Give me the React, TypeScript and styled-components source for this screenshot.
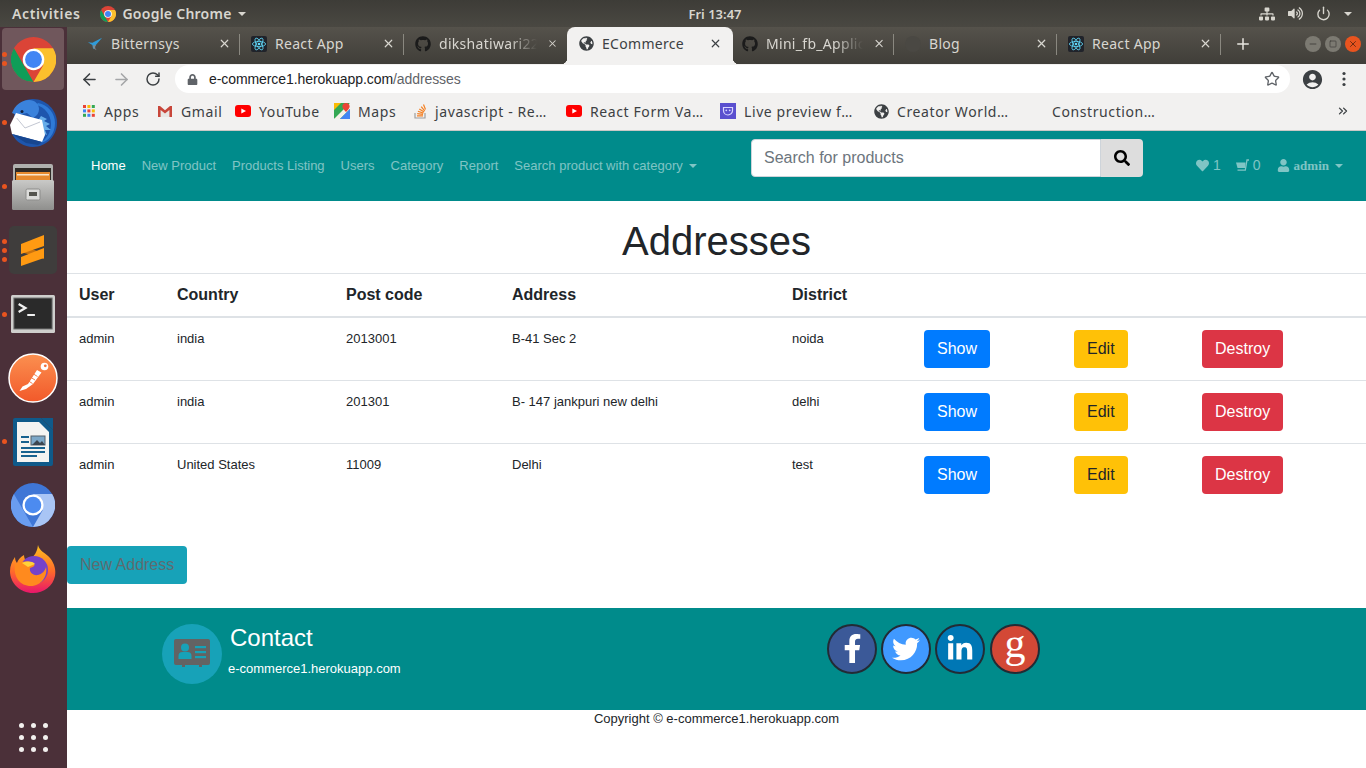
import React from "react";
import styled, { createGlobalStyle } from "styled-components";
import { ArrowLeft, ArrowRight, RotateCw, Star, Plus, X, Minus, Square, Power, ChevronsRight } from "lucide-react";
import {
  FaGithub,
  FaGlobeAmericas,
  FaHeart,
  FaLock,
  FaSearch,
  FaSitemap,
  FaUser,
  FaVolumeUp,
  FaFacebookF,
  FaTwitter,
  FaLinkedinIn,
} from "react-icons/fa";
import { MdAccountCircle } from "react-icons/md";

const GlobalStyle = createGlobalStyle`
  html, body { margin: 0; padding: 0; background: #fff; }
  * { box-sizing: border-box; }
`;

const ChromeLogo = ({ size, a, b, c, hub }: { size: number; a: string; b: string; c: string; hub: string }) => (
  <svg width={size} height={size} viewBox="0 0 48 48">
    <circle cx="24" cy="24" r="24" fill={a} />
    <path d="M24 12h20.900A24 24 0 0 1 24 48l10.400-18z" fill={b} />
    <path d="M24 48A24 24 0 0 1 3.200 12l10.400 18z" fill={c} />
    <circle cx="24" cy="24" r="11.500" fill="#fff" />
    <circle cx="24" cy="24" r="9" fill={hub} />
  </svg>
);

const ReactIcon = () => (
  <svg width="16" height="16" viewBox="0 0 16 16">
    <rect width="16" height="16" rx="2" fill="#20232a" />
    <g fill="none" stroke="#61dafb" strokeWidth="0.8">
      <ellipse cx="8" cy="8" rx="6.600" ry="2.600" />
      <ellipse cx="8" cy="8" rx="6.600" ry="2.600" transform="rotate(60 8 8)" />
      <ellipse cx="8" cy="8" rx="6.600" ry="2.600" transform="rotate(120 8 8)" />
    </g>
    <circle cx="8" cy="8" r="1.300" fill="#61dafb" />
  </svg>
);

const BitternIcon = () => (
  <svg width="18" height="16" viewBox="0 0 18 16">
    <path d="M17 1 6 6.500 1 6l5 3 1 5 3-5z" fill="#2f9bd8" />
    <path d="M10 9c-1 2-1.500 4 1 6-3-1-5-3-4-5.500z" fill="#7d8a91" />
  </svg>
);

const DimCircle = () => (
  <svg width="16" height="16" viewBox="0 0 16 16">
    <circle cx="8" cy="8" r="8" fill="#4a4843" />
  </svg>
);

const AppsIcon = () => {
  const colors = ["#ea4335", "#fbbc05", "#34a853", "#4285f4", "#ea4335", "#fbbc05", "#34a853", "#4285f4", "#ea4335"];
  return (
    <svg width="14" height="14" viewBox="0 0 14 14">
      {colors.map((c, i) => (
        <rect key={i} x={1 + (i % 3) * 4.4} y={1 + Math.floor(i / 3) * 4.4} width="3" height="3" fill={c} />
      ))}
    </svg>
  );
};

const GmailIcon = () => (
  <svg width="16" height="14" viewBox="0 0 16 14">
    <path d="M3.600 6v7h8.800V6L8 9.600z" fill="#e8e6e3" />
    <path d="M1 2h2l5 4.200L13 2h2v11h-2.600V6L8 9.600 3.600 6v7H1z" fill="#c8463a" />
  </svg>
);

const YoutubeIcon = () => (
  <svg width="16" height="12" viewBox="0 0 16 12">
    <rect width="16" height="12" rx="3" fill="#f00" />
    <path d="M6.300 3.400 11 6 6.300 8.600z" fill="#fff" />
  </svg>
);

const MapsIcon = () => (
  <svg width="16" height="16" viewBox="0 0 16 16">
    <rect width="16" height="16" rx="1" fill="#34a853" />
    <path d="M0 16 16 0v6L6 16z" fill="#f4f1e8" />
    <path d="M6 16 16 6v10z" fill="#4285f4" />
    <path d="M0 0h7L0 7z" fill="#fbbc05" />
    <path d="M12 0a3.600 3.600 0 0 1 3.600 3.600C15.600 6 12 9 12 9S8.400 6 8.400 3.600A3.600 3.600 0 0 1 12 0z" fill="#ea4335" />
  </svg>
);

const StackIcon = () => (
  <svg width="14" height="16" viewBox="0 0 14 16">
    <path d="M2 10v5h10v-5" fill="none" stroke="#9e9e9e" strokeWidth="1.200" />
    <path d="M4 12.800h6M4.200 10.600l5.800.8M4.900 8.300l5.500 1.800M6.300 5.900l4.900 3M8.200 3.600l3.500 4.300M10.500 1.500l2 5" stroke="#f48024" strokeWidth="1.200" fill="none" />
  </svg>
);

const LivePreviewIcon = () => (
  <svg width="16" height="16" viewBox="0 0 16 16">
    <rect width="16" height="16" fill="#5a4fcf" />
    <path d="M3.500 4.500h9v3a4.500 4.500 0 0 1-9 0z" fill="none" stroke="#d8d5ff" strokeWidth="1.200" />
    <circle cx="6.300" cy="7.300" r=".9" fill="#d8d5ff" />
    <circle cx="9.700" cy="7.300" r=".9" fill="#d8d5ff" />
  </svg>
);

const ThunderbirdIcon = () => (
  <svg width="50" height="50" viewBox="0 0 50 50">
    <path d="M7 11C11 5 17 1 25 1c13 0 24 11 24 24S38 49 25 49c-9 0-17-5-21-13z" fill="#1e56ad" />
    <path d="M28 7c9 2 15 10 15 19 0 8-4 15-11 19 8-1 15-9 15-20 0-10-7-18-17-20z" fill="#2f7ad6" />
    <path d="M33 18l6 3-3 2 6 3-4 2 5 4-6 0 2 5-5-2 0 5-5-5 2-14z" fill="#66ade9" />
    <path d="M4 15C7 7 14 2 21 2c6 0 10 4 10 9 0 4-2 7-6 9l-6-5-10 2z" fill="#3a82dc" />
    <path d="M8 15 34 22l3 15-3 7L4 36 2 27z" fill="#fff" />
    <path d="M8.700 20 17 30 32 24" fill="none" stroke="#c3c7d2" strokeWidth="1" />
    <path d="M4 36l30 8-4 3-12-2z" fill="#17468f" />
    <circle cx="14" cy="13.500" r="1.500" fill="#10213f" />
  </svg>
);

const FilesIcon = () => (
  <svg width="44" height="46" viewBox="0 0 44 46">
    <defs>
      <linearGradient id="drawer" x1="0" y1="0" x2="0" y2="1">
        <stop offset="0" stopColor="#c9c9c7" />
        <stop offset="1" stopColor="#8f8f8d" />
      </linearGradient>
    </defs>
    <rect x="2" y="0" width="40" height="22" rx="2" fill="#b0b0ae" />
    <rect x="4" y="4" width="36" height="13" fill="#2f2b27" />
    <rect x="5" y="8" width="34" height="9" fill="#e58a2e" />
    <rect x="6" y="10" width="32" height="1.500" fill="#f9e6cb" />
    <rect x="1" y="16" width="42" height="30" rx="1.500" fill="url(#drawer)" />
    <rect x="15" y="25" width="14" height="11" rx="1.500" fill="#dcdcda" stroke="#8d8d8b" />
    <rect x="18" y="28" width="8" height="4" fill="#55554f" />
  </svg>
);

const SublimeIcon = () => (
  <svg width="48" height="48" viewBox="0 0 48 48">
    <rect width="48" height="48" rx="5" fill="#3f3d3c" />
    <path d="M12 20 35 27v6L12 26z" fill="#c9720e" />
    <path d="M12 18 35 9v11L12 28z" fill="#ff9a12" />
    <path d="M12 31 35 22v10L12 40z" fill="#ff9a12" />
  </svg>
);

const TerminalIcon = () => (
  <svg width="44" height="38" viewBox="0 0 46 38" preserveAspectRatio="none">
    <rect width="46" height="38" rx="1.500" fill="#cfcfcd" />
    <rect x="3" y="3" width="40" height="31" fill="#2a2a2a" stroke="#767676" />
    <path d="M8 9l7 4-7 4" fill="none" stroke="#f0f0f0" strokeWidth="2.400" />
    <rect x="17" y="19" width="8" height="2" fill="#f0f0f0" />
  </svg>
);

const PostmanIcon = () => (
  <svg width="50" height="50" viewBox="0 0 50 50">
    <defs>
      <linearGradient id="pm" x1="0" y1="0" x2="0" y2="1">
        <stop offset="0" stopColor="#fb9050" />
        <stop offset="1" stopColor="#f2592a" />
      </linearGradient>
    </defs>
    <circle cx="25" cy="25" r="24" fill="url(#pm)" stroke="#fff" strokeWidth="1.500" />
    <path d="M11.500 38l3-4.500L20 31l9-14 4.500 2.500L25 31l-7 5z" fill="#fff" />
    <path d="M20.500 28l4 2.500M23 24.500l4 2.500M25.500 21l4 2.500" stroke="#f4703a" strokeWidth="0.900" />
    <circle cx="36.500" cy="13.500" r="3.800" fill="#fff" />
    <circle cx="37.300" cy="12.800" r="1.400" fill="#f4703a" />
  </svg>
);

const WriterIcon = () => (
  <svg width="40" height="48" viewBox="0 0 40 48">
    <path d="M2 0h26l12 12v34a2 2 0 0 1-2 2H2a2 2 0 0 1-2-2V2a2 2 0 0 1 2-2z" fill="#0f5a8a" />
    <path d="M4 4h22l10 10v30H4z" fill="#f4f4f2" />
    <path d="M28 0h12v12z" fill="#0f5a8a" />
    <rect x="18" y="18" width="14" height="9" fill="#7da8c8" stroke="#55606a" />
    <path d="M19 27l5-5 3 3 2-2 3 4z" fill="#3c4650" />
    <rect x="8" y="18" width="8" height="2" fill="#17628f" />
    <rect x="8" y="23" width="8" height="2" fill="#17628f" />
    <rect x="8" y="29" width="24" height="2" fill="#17628f" />
    <rect x="8" y="33" width="24" height="2" fill="#17628f" />
    <rect x="8" y="37" width="16" height="2" fill="#17628f" />
  </svg>
);

const FirefoxIcon = () => (
  <svg width="46" height="48" viewBox="0 0 46 48">
    <defs>
      <linearGradient id="ff" x1="0" y1="0" x2="0" y2="1">
        <stop offset="0" stopColor="#ffc21f" />
        <stop offset="0.55" stopColor="#ff6a2a" />
        <stop offset="1" stopColor="#e8166b" />
      </linearGradient>
    </defs>
    <path d="M28 0c1 6 8 8 12 13 5 6 6 13 5 18-2 10-11 17-22 17C10 48 0 38 0 26c0-5 2-10 5-14 0 3 1 5 2 6 1-3 3-6 7-8 0 3 1 5 3 5 5-1 10-6 11-15z" fill="url(#ff)" />
    <circle cx="24" cy="25" r="14" fill="#7542c9" />
    <path d="M5 19c6-3 14-3 18-1 3 2 1 4-3 5-1 4 3 8 8 7 4-1 7-4 8-8 2 9-5 19-15 19-11 0-18-9-16-22z" fill="#ff8a1e" />
    <path d="M12 18c5-2 10-2 13 1l-7 3z" fill="#ffd23a" />
  </svg>
);

const ContactCardIcon = () => (
  <svg width="36" height="29" viewBox="0 0 36 29">
    <rect x="0" y="0" width="36" height="26" rx="2" fill="#636363" />
    <rect x="8" y="25" width="3" height="3" fill="#636363" />
    <rect x="25" y="25" width="3" height="3" fill="#636363" />
    <circle cx="11" cy="8.500" r="4" fill="#17a2b8" />
    <path d="M4.500 20v-3a4 4 0 0 1 4-4h5a4 4 0 0 1 4 4v3z" fill="#17a2b8" />
    <rect x="21" y="7" width="11" height="2.200" fill="#17a2b8" />
    <rect x="21" y="12" width="11" height="2.200" fill="#17a2b8" />
    <rect x="21" y="17" width="11" height="2.200" fill="#17a2b8" />
  </svg>
);

const CartIcon = () => (
  <svg width="13" height="13" viewBox="0 0 13 13">
    <path d="M0 3.500h9.500L9 9H1.500z" fill="currentColor" />
    <path d="M1.500 11.200h7.800L11 1h2" fill="none" stroke="currentColor" strokeWidth="1.300" />
  </svg>
);

const Screen = styled.div`
  width: 1366px;
  height: 768px;
  overflow: hidden;
  display: flex;
  flex-direction: column;
  font-family: "Liberation Sans", Arial, sans-serif;
`;

const TopBar = styled.div`
  height: 27px;
  flex: none;
  background: linear-gradient(#3d3c37, #4a4842);
  color: #d8d6cf;
  display: grid;
  grid-template-columns: 1fr auto 1fr;
  align-items: center;
  font-family: "Noto Sans", sans-serif;
  font-size: 14px;
  font-weight: 600;
  padding: 0 0 0 12px;
`;

const TopLeft = styled.div`
  display: flex;
  align-items: center;
`;

const Activities = styled.span`
  letter-spacing: 0.6px;
`;

const AppMenu = styled.div`
  display: flex;
  align-items: center;
  gap: 6px;
  margin-left: 20px;
  letter-spacing: 0.25px;
`;

const Caret = styled.span<{ $size?: number; $color?: string; $gap?: number }>`
  display: inline-block;
  margin-left: ${(p) => p.$gap ?? 0}px;
  border-left: ${(p) => p.$size ?? 4}px solid transparent;
  border-right: ${(p) => p.$size ?? 4}px solid transparent;
  border-top: ${(p) => p.$size ?? 4}px solid ${(p) => p.$color ?? "currentColor"};
`;

const Clock = styled.div`
  font-size: 13px;
  margin-left: 52px;
`;

const TopRight = styled.div`
  display: flex;
  justify-content: flex-end;
  align-items: center;
  gap: 13px;
  padding-right: 14px;
`;

const Body = styled.div`
  flex: 1;
  display: flex;
  min-height: 0;
`;

const Dock = styled.div`
  width: 67px;
  flex: none;
  background: #4b3039;
  display: flex;
  flex-direction: column;
  align-items: center;
  padding: 1px 3px 0 2px;
`;

const DockItem = styled.div<{ $active?: boolean }>`
  position: relative;
  width: 62px;
  height: 62px;
  margin-bottom: 1.750px;
  flex: none;
  display: flex;
  align-items: center;
  justify-content: center;
  border-radius: 4px;
  background: ${(p) => (p.$active ? "#70575c" : "transparent")};
`;

const DotColumn = styled.div`
  position: absolute;
  left: 0;
  top: 0;
  bottom: 0;
  display: flex;
  flex-direction: column;
  justify-content: center;
  gap: 4px;
`;

const Dot = styled.span`
  width: 5px;
  height: 5px;
  border-radius: 50%;
  background: #e9541f;
`;

const Launcher = styled.div`
  margin-top: auto;
  margin-bottom: 16px;
  display: grid;
  grid-template-columns: repeat(3, 5px);
  gap: 7px;
`;

const LauncherDot = styled.span`
  width: 5px;
  height: 5px;
  border-radius: 50%;
  background: #f2f0ee;
`;

const Browser = styled.div`
  flex: 1;
  min-width: 0;
  display: flex;
  flex-direction: column;
`;

const TabStrip = styled.div`
  height: 37px;
  flex: none;
  display: flex;
  align-items: stretch;
  padding-left: 9px;
  background: linear-gradient(#55524b, #403e39);
`;

const Tab = styled.div<{ $w: number; $pl?: number; $active?: boolean; $sep?: boolean }>`
  position: relative;
  width: ${(p) => p.$w}px;
  flex: none;
  display: flex;
  align-items: center;
  padding: 0 ${(p) => (p.$active ? 11 : 9)}px 4px ${(p) => p.$pl ?? 11}px;
  gap: 8px;
  font-family: "Noto Sans", sans-serif;
  font-size: 14px;
  letter-spacing: 0.3px;
  color: ${(p) => (p.$active ? "#3c4043" : "#d8d6d0")};
  background: ${(p) => (p.$active ? "#f2f1f0" : "transparent")};
  border-radius: ${(p) => (p.$active ? "8px 8px 0 0" : "0")};
  &::after {
    content: "";
    display: ${(p) => (p.$sep ? "block" : "none")};
    position: absolute;
    right: 0;
    top: 7px;
    bottom: 9px;
    width: 1px;
    background: #8a8880;
  }
`;

const TabFlare = styled.span<{ $side: "left" | "right" }>`
  position: absolute;
  bottom: 0;
  ${(p) => p.$side}: -6px;
  width: 6px;
  height: 6px;
  background: radial-gradient(
    circle at ${(p) => (p.$side === "left" ? "0 0" : "100% 0")},
    transparent 6px,
    #f2f1f0 6.500px
  );
`;

const TabIcon = styled.span`
  width: 16px;
  flex: none;
  display: flex;
  justify-content: center;
`;

const TabTitle = styled.span<{ $fade?: boolean }>`
  flex: 1;
  white-space: nowrap;
  ${(p) => (p.$fade ? "mask-image: linear-gradient(90deg, #000 70%, transparent 98%);" : "")}
`;

const NewTab = styled.div`
  display: flex;
  align-items: center;
  color: #e8e6e1;
  margin-left: 13px;
  padding-bottom: 4px;
`;

const WindowControls = styled.div`
  margin-left: auto;
  display: flex;
  align-items: center;
  gap: 4px;
  padding: 0 5px 4px 0;
`;

const WinButton = styled.span<{ $close?: boolean }>`
  width: 16px;
  height: 16px;
  border-radius: 50%;
  display: flex;
  align-items: center;
  justify-content: center;
  color: ${(p) => (p.$close ? "#5a2410" : "#3d3b37")};
  background: ${(p) => (p.$close ? "#e9541f" : "#7c7a72")};
`;

const Toolbar = styled.div`
  height: 31px;
  flex: none;
  background: #f2f1f0;
  display: flex;
  align-items: center;
  padding: 0 0 1px 6px;
  color: #5f6368;
`;

const ToolButton = styled.span<{ $color?: string }>`
  width: 32px;
  display: flex;
  justify-content: center;
  color: ${(p) => p.$color ?? "#3c4043"};
`;

const Omnibox = styled.div`
  width: 1115px;
  height: 28px;
  margin: 0 6px;
  border-radius: 14px;
  background: #fff;
  display: flex;
  align-items: center;
  padding: 0 10px 0 12px;
  font-size: 14px;
  letter-spacing: -0.08px;
  color: #202124;
`;

const UrlPath = styled.span`
  color: #5f6368;
`;

const Url = styled.div`
  margin-left: 11px;
  flex: 1;
`;

const Bookmarks = styled.div`
  height: 36px;
  flex: none;
  background: #f2f1f0;
  display: flex;
  align-items: center;
  padding: 0 0 3px 15px;
  border-bottom: 1px solid #c9c8c6;
  font-family: "Noto Sans", sans-serif;
  font-size: 14px;
  letter-spacing: 0.6px;
  color: #3c4043;
`;

const Bookmark = styled.div<{ $w: number }>`
  width: ${(p) => p.$w}px;
  flex: none;
  display: flex;
  align-items: center;
  gap: 8px;
  white-space: nowrap;
`;

const MoreBookmarks = styled.div`
  margin-left: auto;
  padding-right: 16px;
  display: flex;
  color: #3c4043;
`;

const Page = styled.div`
  flex: 1;
  min-height: 0;
  background: #fff;
  color: #212529;
  display: flex;
  flex-direction: column;
`;

const NavBar = styled.nav`
  height: 70px;
  flex: none;
  background: #008b8b;
  display: flex;
  align-items: flex-start;
  padding-left: 16px;
`;

const NavLinks = styled.div`
  display: flex;
  align-items: center;
  margin-top: 27px;
  width: 668px;
`;

const NavLink = styled.a<{ $active?: boolean }>`
  padding: 0 8px;
  font-size: 13px;
  line-height: 15px;
  white-space: nowrap;
  display: flex;
  align-items: center;
  gap: 6px;
  color: ${(p) => (p.$active ? "#fff" : "rgba(255, 255, 255, 0.5)")};
`;

const SearchForm = styled.div`
  margin-top: 8px;
  display: flex;
  width: 392px;
  height: 38px;
`;

const SearchInput = styled.div`
  flex: 1;
  background: #fff;
  border: 1px solid #ced4da;
  border-radius: 4px 0 0 4px;
  padding: 0 12px;
  display: flex;
  align-items: center;
  font-size: 16px;
  color: #6c757d;
`;

const SearchButton = styled.div`
  width: 42px;
  background: #ddd;
  border-radius: 0 4px 4px 0;
  display: flex;
  align-items: center;
  justify-content: center;
  color: #000;
`;

const UserNav = styled.div`
  margin-top: 27px;
  margin-left: 53px;
  display: flex;
  align-items: center;
  color: rgba(255, 255, 255, 0.5);
  font-family: "Liberation Sans", sans-serif;
  font-size: 14px;
  line-height: 15px;
`;

const UserNavItem = styled.span<{ $gap: number; $mr: number }>`
  display: flex;
  align-items: center;
  gap: ${(p) => p.$gap}px;
  margin-right: ${(p) => p.$mr}px;
`;

const AdminName = styled.b`
  font-family: "Liberation Serif", serif;
  font-size: 13px;
  font-weight: 700;
`;

const Title = styled.h1`
  margin: 16px 0 8px;
  font-size: 40px;
  font-weight: 500;
  line-height: 48px;
  text-align: center;
  color: #212529;
`;

const Table = styled.table`
  width: 100%;
  table-layout: fixed;
  border-collapse: collapse;
  font-size: 13px;
`;

const Col = styled.col<{ $w: number }>`
  width: ${(p) => p.$w}px;
`;

const Th = styled.th`
  padding: 11px 12px 12px;
  height: 43px;
  font-size: 16px;
  line-height: 19px;
  font-weight: 700;
  text-align: left;
  border-top: 1px solid #dee2e6;
  border-bottom: 2px solid #dee2e6;
`;

const Td = styled.td`
  padding: 12px;
  height: 63px;
  line-height: 18px;
  vertical-align: top;
  border-top: 1px solid #dee2e6;
`;

const Button = styled.a<{ $bg: string; $fg: string }>`
  display: inline-block;
  padding: 0 13px;
  height: 38px;
  line-height: 37px;
  font-size: 16px;
  border-radius: 4px;
  background: ${(p) => p.$bg};
  color: ${(p) => p.$fg};
`;

const NewAddress = styled(Button)`
  align-self: flex-start;
  margin: 39px 0 24px;
`;

const Footer = styled.footer`
  height: 102px;
  flex: none;
  background: #008b8b;
  display: flex;
  align-items: flex-start;
  padding: 16px 0 0 95px;
  color: #fff;
`;

const ContactCircle = styled.div`
  width: 60px;
  height: 60px;
  flex: none;
  border-radius: 50%;
  background: #17a2b8;
  display: flex;
  align-items: center;
  justify-content: center;
`;

const ContactText = styled.div`
  width: 599px;
  margin-left: 6px;
`;

const ContactTitle = styled.div`
  font-size: 24px;
  line-height: 29px;
  margin: -1px 0 0 2px;
`;

const ContactUrl = styled.div`
  font-size: 13px;
  line-height: 18px;
  margin-top: 8px;
`;

const Socials = styled.div`
  display: flex;
  gap: 4px;
`;

const Social = styled.span<{ $bg: string; $ml?: number }>`
  width: 50px;
  height: 50px;
  margin-left: ${(p) => p.$ml ?? 0}px;
  border-radius: 50%;
  border: 2px solid #222b35;
  background: ${(p) => p.$bg};
  color: #fff;
  display: flex;
  align-items: center;
  justify-content: center;
`;

const GoogleG = styled.span`
  font-family: "Liberation Serif", serif;
  font-size: 42px;
  line-height: 40px;
  margin-top: -12px;
`;

const Copyright = styled.div`
  text-align: center;
  font-size: 13px;
  line-height: 18px;
  color: #212529;
`;

const tabs = [
  { w: 164, icon: <BitternIcon />, title: "Bitternsys", sep: true },
  { w: 164, icon: <ReactIcon />, title: "React App", sep: true },
  { w: 163, icon: <FaGithub size={16} color="#1b1b1b" />, title: "dikshatiwari22", fade: true },
  { w: 166, icon: <FaGlobeAmericas size={15} color="#3c4043" />, title: "ECommerce", active: true },
  { w: 161, pl: 9, icon: <FaGithub size={16} color="#1b1b1b" />, title: "Mini_fb_Applic", fade: true, sep: true },
  { w: 163, icon: <DimCircle />, title: "Blog", sep: true },
  { w: 164, icon: <ReactIcon />, title: "React App", sep: true },
];

const bookmarks = [
  { w: 75, icon: <AppsIcon />, title: "Apps" },
  { w: 78, icon: <GmailIcon />, title: "Gmail" },
  { w: 99, icon: <YoutubeIcon />, title: "YouTube" },
  { w: 79, icon: <MapsIcon />, title: "Maps" },
  { w: 153, icon: <StackIcon />, title: "javascript - Re…" },
  { w: 154, icon: <YoutubeIcon />, title: "React Form Va…" },
  { w: 154, icon: <LivePreviewIcon />, title: "Live preview f…" },
  { w: 178, icon: <FaGlobeAmericas size={15} color="#3c4043" />, title: "Creator World…" },
  { w: 120, icon: null, title: "Construction…" },
];

const navLinks = ["New Product", "Products Listing", "Users", "Category", "Report"];

const columns = [98, 169, 166, 280, 132, 150, 128, 176];

const addresses = [
  { user: "admin", country: "india", post: "2013001", address: "B-41 Sec 2", district: "noida" },
  { user: "admin", country: "india", post: "201301", address: "B- 147 jankpuri new delhi", district: "delhi" },
  { user: "admin", country: "United States", post: "11009", address: "Delhi", district: "test" },
];

const App = () => (
  <Screen>
    <GlobalStyle />
    <TopBar>
      <TopLeft>
        <Activities>Activities</Activities>
        <AppMenu>
          <ChromeLogo size={16} a="#db4437" b="#fbc02d" c="#0f9d58" hub="#4285f4" />
          Google Chrome
          <Caret />
        </AppMenu>
      </TopLeft>
      <Clock>Fri 13:47</Clock>
      <TopRight>
        <FaSitemap size={16} />
        <FaVolumeUp size={15} />
        <Power size={15} strokeWidth={2.2} />
        <Caret />
      </TopRight>
    </TopBar>
    <Body>
      <Dock>
        <DockItem $active>
          <DotColumn>
            <Dot />
            <Dot />
          </DotColumn>
          <ChromeLogo size={45} a="#db4437" b="#fbc02d" c="#0f9d58" hub="#4285f4" />
        </DockItem>
        <DockItem>
          <DotColumn>
            <Dot />
          </DotColumn>
          <ThunderbirdIcon />
        </DockItem>
        <DockItem>
          <DotColumn>
            <Dot />
          </DotColumn>
          <FilesIcon />
        </DockItem>
        <DockItem>
          <DotColumn>
            <Dot />
            <Dot />
            <Dot />
          </DotColumn>
          <SublimeIcon />
        </DockItem>
        <DockItem>
          <DotColumn>
            <Dot />
          </DotColumn>
          <TerminalIcon />
        </DockItem>
        <DockItem>
          <PostmanIcon />
        </DockItem>
        <DockItem>
          <DotColumn>
            <Dot />
          </DotColumn>
          <WriterIcon />
        </DockItem>
        <DockItem>
          <ChromeLogo size={44} a="#3f76d6" b="#a9c5f5" c="#6a9df0" hub="#4c8bf0" />
        </DockItem>
        <DockItem>
          <FirefoxIcon />
        </DockItem>
        <Launcher>
          {Array.from({ length: 9 }).map((_, i) => (
            <LauncherDot key={i} />
          ))}
        </Launcher>
      </Dock>
      <Browser>
        <TabStrip>
          {tabs.map((t, i) => (
            <Tab key={i} $w={t.w} $pl={t.pl} $active={t.active} $sep={t.sep}>
              {t.active && <TabFlare $side="left" />}
              <TabIcon>{t.icon}</TabIcon>
              <TabTitle $fade={t.fade}>{t.title}</TabTitle>
              <X size={13} strokeWidth={2.2} />
              {t.active && <TabFlare $side="right" />}
            </Tab>
          ))}
          <NewTab>
            <Plus size={18} strokeWidth={2} />
          </NewTab>
          <WindowControls>
            <WinButton>
              <Minus size={10} />
            </WinButton>
            <WinButton>
              <Square size={8} />
            </WinButton>
            <WinButton $close>
              <X size={10} />
            </WinButton>
          </WindowControls>
        </TabStrip>
        <Toolbar>
          <ToolButton>
            <ArrowLeft size={19} strokeWidth={2} />
          </ToolButton>
          <ToolButton $color="#a5a6a8">
            <ArrowRight size={19} strokeWidth={2} />
          </ToolButton>
          <ToolButton>
            <RotateCw size={16} strokeWidth={2.2} />
          </ToolButton>
          <Omnibox>
            <FaLock size={11} color="#5f6368" />
            <Url>
              e-commerce1.herokuapp.com<UrlPath>/addresses</UrlPath>
            </Url>
            <Star size={16} color="#5f6368" />
          </Omnibox>
          <ToolButton>
            <MdAccountCircle size={23} />
          </ToolButton>
          <ToolButton>
            <svg width="4" height="16" viewBox="0 0 4 16">
              <circle cx="2" cy="2.500" r="1.600" fill="#3c4043" />
              <circle cx="2" cy="8" r="1.600" fill="#3c4043" />
              <circle cx="2" cy="13.500" r="1.600" fill="#3c4043" />
            </svg>
          </ToolButton>
        </Toolbar>
        <Bookmarks>
          {bookmarks.map((b) => (
            <Bookmark key={b.title} $w={b.w}>
              {b.icon}
              {b.title}
            </Bookmark>
          ))}
          <MoreBookmarks>
            <ChevronsRight size={14} strokeWidth={2.2} />
          </MoreBookmarks>
        </Bookmarks>
        <Page>
          <NavBar>
            <NavLinks>
              <NavLink $active>Home</NavLink>
              {navLinks.map((l) => (
                <NavLink key={l}>{l}</NavLink>
              ))}
              <NavLink>
                Search product with category
                <Caret />
              </NavLink>
            </NavLinks>
            <SearchForm>
              <SearchInput>Search for products</SearchInput>
              <SearchButton>
                <FaSearch size={16} />
              </SearchButton>
            </SearchForm>
            <UserNav>
              <UserNavItem $gap={4} $mr={15}>
                <FaHeart size={13} />1
              </UserNavItem>
              <UserNavItem $gap={4} $mr={16}>
                <CartIcon />0
              </UserNavItem>
              <UserNavItem $gap={4} $mr={16}>
                <FaUser size={13} />
                <AdminName>admin</AdminName>
                <Caret $gap={2} />
              </UserNavItem>
            </UserNav>
          </NavBar>
          <Title>Addresses</Title>
          <Table>
            <colgroup>
              {columns.map((w, i) => (
                <Col key={i} $w={w} />
              ))}
            </colgroup>
            <thead>
              <tr>
                <Th>User</Th>
                <Th>Country</Th>
                <Th>Post code</Th>
                <Th>Address</Th>
                <Th>District</Th>
                <Th />
                <Th />
                <Th />
              </tr>
            </thead>
            <tbody>
              {addresses.map((a) => (
                <tr key={a.post}>
                  <Td>{a.user}</Td>
                  <Td>{a.country}</Td>
                  <Td>{a.post}</Td>
                  <Td>{a.address}</Td>
                  <Td>{a.district}</Td>
                  <Td>
                    <Button $bg="#007bff" $fg="#fff">Show</Button>
                  </Td>
                  <Td>
                    <Button $bg="#ffc107" $fg="#212529">Edit</Button>
                  </Td>
                  <Td>
                    <Button $bg="#dc3545" $fg="#fff">Destroy</Button>
                  </Td>
                </tr>
              ))}
            </tbody>
          </Table>
          <NewAddress $bg="#17a2b8" $fg="#5f6b70">New Address</NewAddress>
          <Footer>
            <ContactCircle>
              <ContactCardIcon />
            </ContactCircle>
            <ContactText>
              <ContactTitle>Contact</ContactTitle>
              <ContactUrl>e-commerce1.herokuapp.com</ContactUrl>
            </ContactText>
            <Socials>
              <Social $bg="#3b5998">
                <FaFacebookF size={29} />
              </Social>
              <Social $bg="#4099ff">
                <FaTwitter size={28} />
              </Social>
              <Social $bg="#0077b5">
                <FaLinkedinIn size={28} />
              </Social>
              <Social $bg="#d34836" $ml={1}>
                <GoogleG>g</GoogleG>
              </Social>
            </Socials>
          </Footer>
          <Copyright>Copyright © e-commerce1.herokuapp.com</Copyright>
        </Page>
      </Browser>
    </Body>
  </Screen>
);

export default App;
